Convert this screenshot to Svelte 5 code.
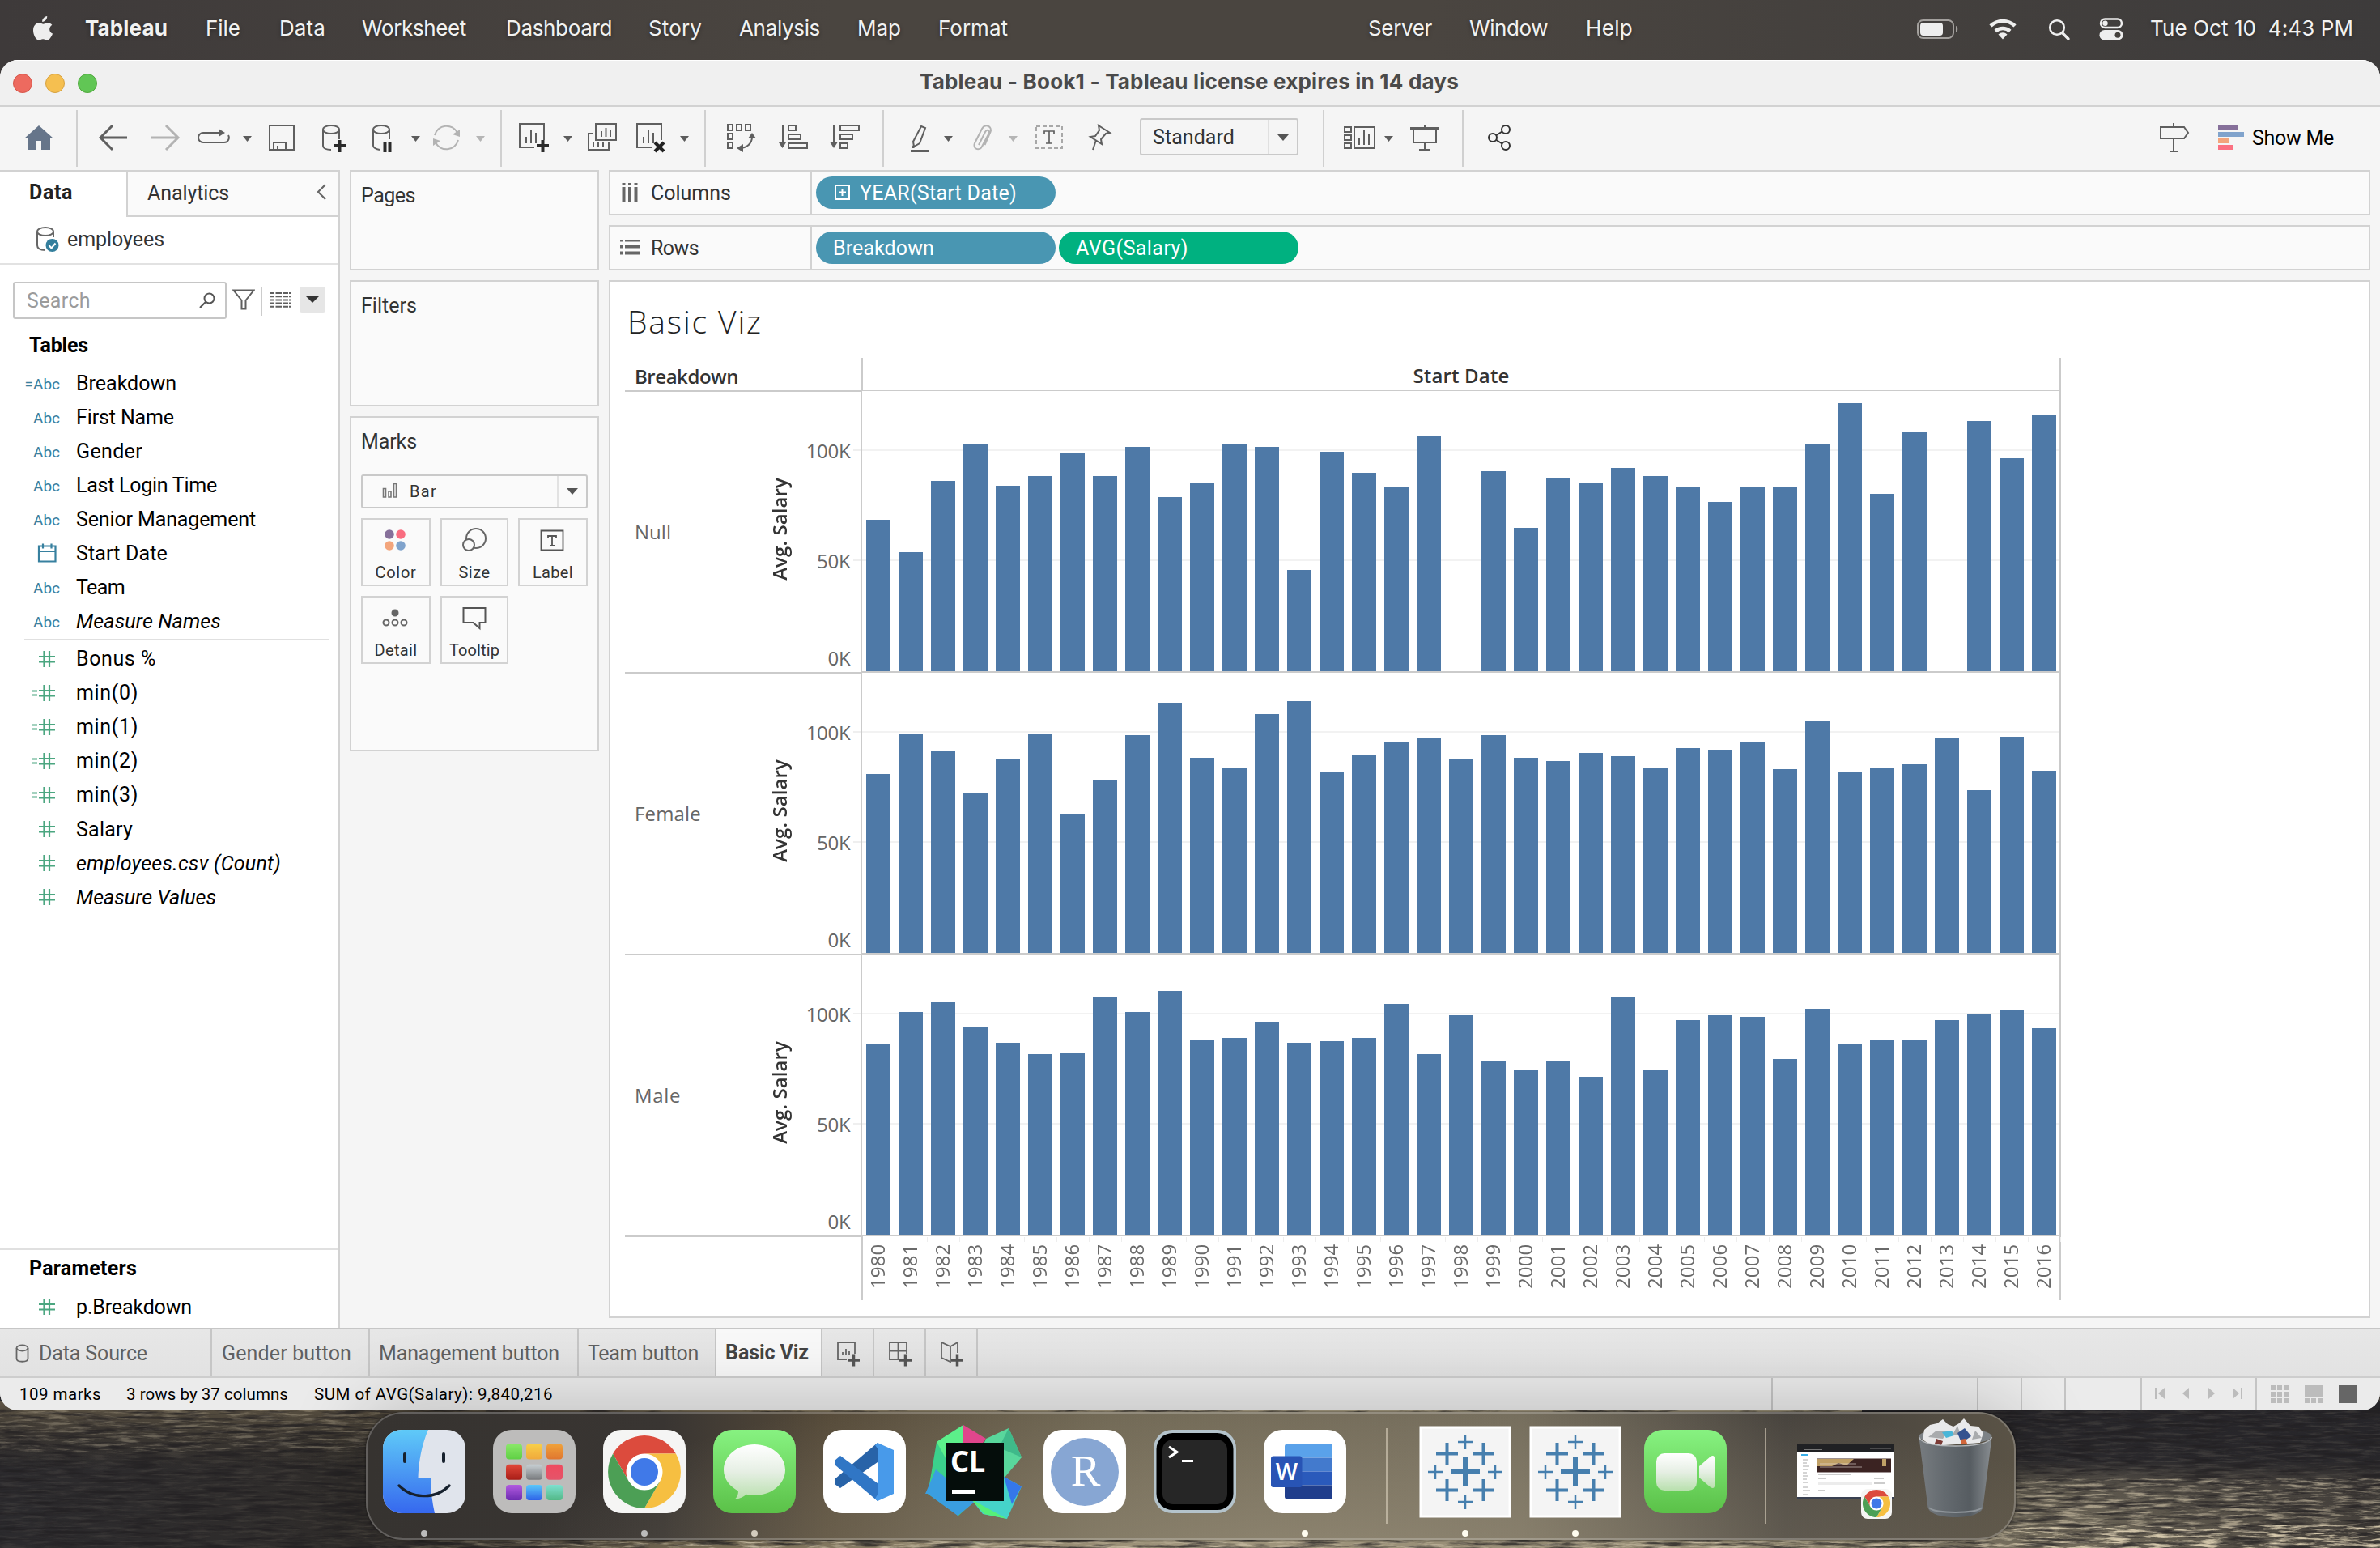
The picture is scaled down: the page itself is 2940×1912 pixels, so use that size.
<script>
  // Tracks a label out or in so that it occupies the given width.
  function fit(node, width) {
    const natural = node.getBoundingClientRect().width;
    const count = node.textContent.length;
    if (natural > 0 && count > 0) node.style.letterSpacing = `${(width - natural) / count}px`;
  }

  const menus = [
    ['Tableau', 102, 'm1'], ['File', 43, 'm2'], ['Data', 57, 'm3'], ['Worksheet', 129, 'm4'],
    ['Dashboard', 131, 'm5'], ['Story', 66, 'm6'], ['Analysis', 100, 'm7'], ['Map', 54, 'm8'],
    ['Format', 86, 'm9'], ['Server', 79, 'm10'], ['Window', 97, 'm11'], ['Help', 58, 'm12']
  ];

  const dimensions = [
    { name: 'Breakdown', w: 124, calc: true },
    { name: 'First Name', w: 121 },
    { name: 'Gender', w: 82 },
    { name: 'Last Login Time', w: 174 },
    { name: 'Senior Management', w: 222 },
    { name: 'Start Date', w: 113, date: true },
    { name: 'Team', w: 60 },
    { name: 'Measure Names', w: 179, italic: true }
  ];
  const measures = [
    { name: 'Bonus %', w: 99 },
    { name: 'min(0)', w: 77, calc: true },
    { name: 'min(1)', w: 77, calc: true },
    { name: 'min(2)', w: 77, calc: true },
    { name: 'min(3)', w: 77, calc: true },
    { name: 'Salary', w: 70 },
    { name: 'employees.csv (Count)', w: 253, italic: true },
    { name: 'Measure Values', w: 173, italic: true }
  ];

  const years = Array.from({ length: 37 }, (_, i) => 1980 + i);
  const bands = [
    { name: 'Null', w: 45, bars: [187,147,235,281,229,241,269,241,277,215,233,281,277,125,271,245,227,291,0,247,177,239,233,251,241,227,209,227,227,281,331,219,295,0,309,263,317] },
    { name: 'Female', w: 82, bars: [221,271,249,197,239,271,171,213,269,309,241,229,295,311,223,245,261,265,239,269,241,237,247,243,229,253,251,261,227,287,223,229,233,265,201,267,225] },
    { name: 'Male', w: 57, bars: [235,275,287,257,237,223,225,293,275,301,241,243,263,237,239,243,285,223,271,215,203,215,195,293,203,265,271,269,217,279,235,241,241,265,273,277,255] }
  ];

  const plusMarks = [
    [0, 74, 18, 6], [-22.5, 51.5, 13.5, 4], [22.5, 51.5, 13.5, 4], [-22.5, 96.5, 13.5, 4], [22.5, 96.5, 13.5, 4],
    [0, 37, 9, 2.5], [0, 111, 9, 2.5], [-37, 74, 9, 2.5], [37, 74, 9, 2.5]
  ];
  const pads = [
    ['#8be86a', '#5fd044'], ['#f8cf48', '#f0a93c'], ['#f0a23a', '#e0762f'],
    ['#e2483a', '#a81d17'], ['#c8d0d4', '#77797c'], ['#ef4a5e', '#e5546a'],
    ['#b25be0', '#6c2bb0'], ['#5bc8fa', '#2d62e8'], ['#7fe0d0', '#52b886']
  ];
</script>

{#snippet caret(x, light)}
  <path d="M{x - 5} 168h11l-5.5 7z" fill={light ? '#b5b5b5' : '#5c5c5c'} stroke="none" />
{/snippet}

{#snippet hash(calc)}
  <svg class="ficon" viewBox="0 0 40 26">
    <path d="M21.5 3v20M28 3v20M15 10h20M15 16.5h20" stroke="#4ba680" stroke-width="2.2" />
    {#if calc}<path d="M7 10.5h6M7 15.5h6" stroke="#4ba680" stroke-width="2.2" />{/if}
  </svg>
{/snippet}

{#snippet chromeMark()}
  <circle r="45" fill="#fff" />
  <path d="M-38.9 -22.5A45 45 0 0 1 38.9 -22.5H0A22.5 22.5 0 0 0 -19.5 11.2z" fill="#dc4b3d" />
  <path d="M38.9 -22.5A45 45 0 0 1 0 45L19.5 11.2A22.5 22.5 0 0 0 0 -22.5z" fill="#f6bf41" />
  <path d="M0 45A45 45 0 0 1 -38.9 -22.5L-19.5 11.2A22.5 22.5 0 0 0 19.5 11.2z" fill="#4c9f55" />
  <circle r="21.5" fill="#fff" />
  <circle r="17" fill="#4079e8" />
{/snippet}

{#snippet tableauIcon()}
  <svg class="app" viewBox="-68 0 136 158">
    <rect x="-55" y="19" width="110" height="110" fill="#f4f4f4" stroke="#fff" stroke-width="3" />
    {#each plusMarks as [x, y, r, t]}
      <path d="M{x - r} {y}h{2 * r}M{x} {y - r}v{2 * r}" stroke="#467fae" stroke-width={t} />
    {/each}
    <circle cy="150" r="4" fill="#fffdf0" />
  </svg>
{/snippet}

<div class="screen">
  <svg class="wallpaper" viewBox="0 0 2940 1912">
    <defs>
      <filter id="grain" x="0" y="0" width="100%" height="100%" color-interpolation-filters="sRGB">
        <feTurbulence type="fractalNoise" baseFrequency="0.035 0.3" numOctaves="5" seed="8" />
        <feColorMatrix values="0 0 0 0 .84  0 0 0 0 .79  0 0 0 0 .68  3.4 1.2 0 0 -2.15" />
      </filter>
      <filter id="dark" x="0" y="0" width="100%" height="100%" color-interpolation-filters="sRGB">
        <feTurbulence type="fractalNoise" baseFrequency="0.02 0.22" numOctaves="5" seed="3" />
        <feColorMatrix values="0 0 0 0 .13  0 0 0 0 .12  0 0 0 0 .13  3.4 1 0 0 -2" />
      </filter>
      <linearGradient id="wl" x1="0" x2="1" y1="0" y2="0">
        <stop offset="0" stop-color="#2b2a2d" /><stop offset=".15" stop-color="#302d2b" />
        <stop offset=".3" stop-color="#85785e" /><stop offset=".5" stop-color="#b5a98d" />
        <stop offset=".75" stop-color="#a0967c" /><stop offset="1" stop-color="#47423c" />
      </linearGradient>
      <linearGradient id="topfade" x1="0" x2="0" y1="0" y2="1">
        <stop offset="0" stop-color="#262529" stop-opacity="1" /><stop offset=".4" stop-color="#262529" stop-opacity=".95" />
        <stop offset=".58" stop-color="#262529" stop-opacity=".3" /><stop offset="1" stop-color="#262529" stop-opacity="0" />
      </linearGradient>
      <linearGradient id="leftband" x1="0" x2="0" y1="0" y2="1">
        <stop offset="0" stop-color="#695e4a" stop-opacity=".85" /><stop offset="1" stop-color="#3a342b" stop-opacity="0" />
      </linearGradient>
      <linearGradient id="mg" x1="0" x2="1" y1="0" y2="0">
        <stop offset="0" stop-color="#fff" stop-opacity="0" /><stop offset=".2" stop-color="#fff" />
      </linearGradient>
      <mask id="ease"><rect x="430" y="1740" width="2510" height="172" fill="url(#mg)" /></mask>
    </defs>
    <rect y="1700" width="2940" height="212" fill="url(#wl)" />
    <rect x="2300" y="1730" width="640" height="182" fill="url(#topfade)" />
    <rect y="1730" width="600" height="86" fill="url(#leftband)" />
    <g mask="url(#ease)"><rect x="430" y="1884" width="2510" height="28" filter="url(#grain)" /></g>
    <rect x="2440" y="1826" width="500" height="86" filter="url(#grain)" opacity=".6" />
    <rect y="1740" width="470" height="54" filter="url(#grain)" opacity=".3" />
    <rect y="1794" width="470" height="118" filter="url(#grain)" opacity=".07" />
    <rect x="2440" y="1740" width="500" height="86" filter="url(#grain)" opacity=".1" />
    <rect y="1736" width="2940" height="176" filter="url(#dark)" opacity=".7" />
  </svg>

  <header class="menubar">
    <svg class="apple" viewBox="0 0 28 34">
      <path d="M19.2 1c.3 3.4-2.600 6.900-6 6.900C12.800 4.800 15.700 1.400 19.200 1zM25.300 11.700c-4.600 2.900-3.800 9 .7 10.900-1 2.900-3.600 8-6.600 8-2.200 0-2.900-1.300-5.300-1.300s-3.200 1.300-5.200 1.300C5.600 30.600 2 24.200 2 18.500 2 12.700 5.500 9.300 9.300 9.300c2.200 0 3.900 1.500 5.200 1.500 1.200 0 3.300-1.700 5.900-1.500 1.800.1 3.800.9 4.900 2.400z" fill="#eee" />
    </svg>
    {#each menus as [label, w, slot], i}
      <div class="menu {slot}" class:strong={i === 0}><span use:fit={w}>{label}</span></div>
    {/each}
    <svg class="tray" viewBox="2360 0 290 74">
      <rect x="2369" y="25" width="44" height="22" rx="6.500" fill="none" stroke="#a3a09d" stroke-width="2" />
      <rect x="2372" y="28" width="28" height="16" rx="4" fill="#eee" />
      <path d="M2416 32c3 1 3 7 0 8z" fill="#a3a09d" />
      <g fill="none" stroke="#eee" stroke-width="4.500">
        <path d="M2459 32a21.500 21.500 0 0 1 30 0" /><path d="M2465 38.500a13.500 13.500 0 0 1 18 0" />
      </g>
      <path d="M2468.500 42.500a8 8 0 0 1 11 0l-5.500 6z" fill="#eee" />
      <circle cx="2541" cy="34" r="8.800" fill="none" stroke="#eee" stroke-width="2.600" />
      <path d="M2547.500 40.500l7.500 7.500" stroke="#eee" stroke-width="3.400" stroke-linecap="round" />
      <rect x="2595" y="23.500" width="26" height="10.500" rx="5.250" fill="none" stroke="#eee" stroke-width="2.500" />
      <circle cx="2600.500" cy="28.700" r="3.200" fill="#eee" />
      <rect x="2593.500" y="37" width="29" height="12.500" rx="6.250" fill="#eee" /><circle cx="2616" cy="43.200" r="3.500" fill="#45413d" />
    </svg>
    <div class="clock"><span use:fit={251}>Tue Oct 10&nbsp; 4:43 PM</span></div>
  </header>

  <main class="window">
    <div class="titlebar">
      <div class="lights"><i class="red"></i><i class="amber"></i><i class="green"></i></div>
      <span class="wtitle" use:fit={666}>Tableau - Book1 - Tableau license expires in 14 days</span>
    </div>

    <nav class="toolbar">
      <svg class="tg g1" viewBox="0 136 94 70">
        <path d="M48 155l18 16h-4v14H51v-11h-7v11H34v-14h-4z" fill="#66758a" />
      </svg>
      <svg class="tg g2" viewBox="96 136 522 70" fill="none" stroke="#5f5f5f" stroke-width="2">
        <path d="M157 170h-33M139 155l-15 15 15 15" stroke-width="3" />
        <path d="M187 170h33M205 155l15 15-15 15" stroke="#b3b3b3" stroke-width="3" />
        <path d="M272 164h-21a6 6 0 0 0 0 12h26a6 6 0 0 0 5-9" /><path d="M270 159l8 5-8 5z" fill="#5f5f5f" stroke="none" />
        {@render caret(305)}
        <path d="M333 155h30v30h-30zM338 185v-9h15v9M343 185v-5" />
        <ellipse cx="409" cy="160" rx="10" ry="5" /><path d="M399 160v20c0 3 4 5 10 5M419 160v12" /><path d="M412 180h15M419.500 173v15" stroke="#2b2b2b" stroke-width="4" />
        <ellipse cx="471" cy="160" rx="10" ry="5" /><path d="M461 160v20c0 3 3 4 8 5M481 160v12" /><path d="M475.500 175v13M481.500 175v13" stroke="#2b2b2b" stroke-width="4" />
        {@render caret(513)}
        <g stroke="#b3b3b3"><path d="M537 167a15 15 0 0 1 28-3M566 173a15 15 0 0 1-28 3" /><path d="M568 160v9l-9-3zM535 180v-9l9 3z" fill="#b3b3b3" stroke="none" /></g>
        {@render caret(593, true)}
      </svg>
      <svg class="tg g3" viewBox="620 136 250 70" fill="none" stroke="#5f5f5f" stroke-width="2">
        <path d="M660 182h-18v-29h30v20M650 177v-8M656 177v-17M662 177v-13" /><path d="M663 180h15M670.500 173v15" stroke="#2b2b2b" stroke-width="4" />
        {@render caret(701)}
        <path d="M736 153h25v20h-25zM732 165h-5v20h25v-9M743 169v-7M748.500 169v-11M754 169v-8" /><path d="M733 181v-5M739 181v-5M745 181v-5" />
        <path d="M805 182h-18v-29h30v20M795 177v-8M801 177v-17M807 177v-13" /><path d="M809 176l11 11M820 176l-11 11" stroke="#222" stroke-width="4" />
        {@render caret(845)}
      </svg>
      <svg class="tg g4" viewBox="872 136 218 70" fill="none" stroke="#5f5f5f" stroke-width="2">
        <path d="M899 154h6v7h-6zM910 154h6v7h-6zM921 154h6v7h-6zM899 165h6v7h-6zM899 176h6v7h-6z" />
        <path d="M913 183c10 0 16-6 16-14" /><path d="M924 171l5-7 5 7zM918 178v10l-8-5z" fill="#5f5f5f" stroke="none" />
        <path d="M967 155v22M974 155h9v6h-9zM974 166h15v6h-15zM974 177h23v6h-23z" /><path d="M962 176h9l-4.500 7z" fill="#5f5f5f" stroke="none" />
        <path d="M1030 155v22M1038 155h23v6h-23zM1038 166h15v6h-15zM1038 177h9v6h-9z" /><path d="M1025.500 176h9l-4.500 7z" fill="#5f5f5f" stroke="none" />
      </svg>
      <svg class="tg g5" viewBox="1092 132 316 76" fill="none" stroke="#5f5f5f" stroke-width="2">
        <path d="M1138 156l5 2-7 19-7 4-1-6z" /><path d="M1125 186.500h22" stroke-width="3" /><path d="M1126 178l4 5h-4z" fill="#5f5f5f" stroke="none" />
        {@render caret(1171)}
        <path d="M1209 179l8-16c2-4 6-2 4.500 2l-8.500 16c-3 6-12 3-9-4l9-18c4-7 13-3 10.500 4l-7 16" stroke="#b3b3b3" />
        {@render caret(1251, true)}
        <rect x="1280" y="156" width="32" height="27" stroke="#a8a8a8" stroke-dasharray="5 3" />
        <path d="M1290 165v-3h12v3M1296 162v15M1292 177h8" stroke-width="1.700" />
        <path d="M1357 155l14 9-5 1-6 7 1 6-14-9 6-1 5-7zM1354 173l-4 12" />
      </svg>
      <div class="select"><span use:fit={101}>Standard</span><i><b></b></i></div>
      <svg class="tg g6" viewBox="1604 132 202 76" fill="none" stroke="#5f5f5f" stroke-width="2">
        <path d="M1635 136v70" stroke="#d0d0d0" />
        <path d="M1661 157h8v6h-8zM1661 167h8v6h-8zM1661 177h8v6h-8zM1673 157h25v26h-25zM1679 179v-8M1685 179v-18M1691 179v-13" />
        {@render caret(1715)}
        <path d="M1742 159h35" stroke-width="4" /><path d="M1746 159v17h28v-17M1760 154v4M1760 176v9M1753 185h14" />
      </svg>
      <svg class="tg g7" viewBox="1806 132 974 76" fill="none" stroke="#333" stroke-width="2">
        <path d="M1807 136v70" stroke="#d0d0d0" />
        <circle cx="1844" cy="170" r="5" /><circle cx="1860" cy="160" r="5" /><circle cx="1860" cy="180" r="5" /><path d="M1848.500 167l7-4.500M1848.500 173l7 4.500" />
        <path d="M2669 157h29l5 7-5 7h-29zM2685 152v4M2685 172v15M2680 187h10" stroke="#5f5f5f" />
        <path d="M2740 158h25" stroke="#86709a" stroke-width="6" /><path d="M2740 166h32" stroke="#80a3cc" stroke-width="6" />
        <path d="M2740 174h13" stroke="#f3a57c" stroke-width="6" /><path d="M2740 182h19" stroke="#fb7182" stroke-width="6" />
      </svg>
      <span class="showme" use:fit={101}>Show Me</span>
    </nav>

    <div class="work">
      <aside class="side">
        <div class="tabs2">
          <div class="tabA"><span use:fit={54}>Data</span></div>
          <div class="tabB"><span use:fit={101}>Analytics</span>
            <svg viewBox="0 0 14 20"><path d="M12 1L3 10l9 9" fill="none" stroke="#666" stroke-width="2.200" /></svg>
          </div>
        </div>
        <div class="source">
          <svg viewBox="44 280 32 34" fill="none" stroke="#666" stroke-width="2">
            <ellipse cx="56" cy="287" rx="10" ry="5" /><path d="M46 287v17c0 4 4 6 10 6M66 287v7" />
            <circle cx="64.500" cy="304" r="8" fill="#347f9d" stroke="none" /><path d="M60.500 304l3 3.500 5-6" stroke="#fff" />
          </svg>
          <span use:fit={120}>employees</span>
        </div>
        <div class="searchrow">
          <div class="search"><span use:fit={79}>Search</span>
            <svg viewBox="0 0 20 20"><circle cx="12.500" cy="7.500" r="6" fill="none" stroke="#555" stroke-width="2" /><path d="M8 12l-7 7" stroke="#555" stroke-width="2.200" /></svg>
          </div>
          <svg class="funnel" viewBox="0 0 28 26"><path d="M1.500 1.500h25L16.500 14v10.500h-5V14z" fill="none" stroke="#5f5f5f" stroke-width="2" /></svg>
          <svg class="list" viewBox="322 350 44 38">
            <path d="M324 352v36" stroke="#ccc" stroke-width="2" />
            <path d="M335 360h26M335 364.200h26M335 368.400h26M335 372.600h26M335 376.800h26" stroke="#5f5f5f" stroke-width="2" stroke-dasharray="5 1.500 7.500 1 7 1 3 0" />
          </svg>
          <div class="drop"><b></b></div>
        </div>
        <h2><span use:fit={73}>Tables</span></h2>
        <ul>
          {#each dimensions as f}
            <li>
              {#if f.date}
                <svg class="ficon" viewBox="0 0 40 26"><path d="M15 4.500h20.500v19H15zM15 11h20M20 1.500v6M30.500 1.500v6" fill="none" stroke="#37809f" stroke-width="2.200" /></svg>
              {:else}
                <i class="abc">{f.calc ? '=' : ''}<span use:fit={32}>Abc</span></i>
              {/if}
              <span class="fname" class:italic={f.italic} use:fit={f.w}>{f.name}</span>
            </li>
          {/each}
        </ul>
        <hr />
        <ul>
          {#each measures as f}
            <li>{@render hash(f.calc)}<span class="fname" class:italic={f.italic} use:fit={f.w}>{f.name}</span></li>
          {/each}
        </ul>
        <section class="params">
          <h2><span use:fit={133}>Parameters</span></h2>
          <ul><li>{@render hash(false)}<span class="fname" use:fit={143}>p.Breakdown</span></li></ul>
        </section>
      </aside>

      <div class="cards">
        <section class="card pages"><span use:fit={67}>Pages</span></section>
        <section class="card filters"><span use:fit={69}>Filters</span></section>
        <section class="card marks">
          <span use:fit={69}>Marks</span>
          <div class="marktype">
            <svg viewBox="0 0 20 20"><path d="M2.500 7.500h3v10.500h-3zM9 11h3v7h-3zM15.500 1.500h3v16.500h-3z" fill="none" stroke="#777" stroke-width="1.600" /></svg>
            <span use:fit={34}>Bar</span><i><b></b></i>
          </div>
          <div class="btns">
            <div><svg viewBox="-20 -20 40 40"><circle cx="-8" cy="-7" r="5.800" fill="#86709a" /><circle cx="6" cy="-7" r="5.800" fill="#f96d80" /><circle cx="-8" cy="7" r="5.800" fill="#f3a57c" /><circle cx="6" cy="7" r="5.800" fill="#80a3cc" /></svg><span use:fit={51}>Color</span></div>
            <div><svg viewBox="-20 -20 40 40" fill="#fafafa" stroke="#666" stroke-width="2"><circle cx="2" cy="-2" r="12" /><circle cx="-7" cy="6" r="7" /></svg><span use:fit={39}>Size</span></div>
            <div><svg viewBox="-20 -20 40 40" fill="none" stroke="#555" stroke-width="1.800"><path d="M-14.500 -11.500h27v24h-27zM-6 -2.500v-2.500h10v2.500M-1 -5v12M-4 7h6" /></svg><span use:fit={50}>Label</span></div>
            <div><svg viewBox="-20 -20 40 40" fill="none" stroke="#666" stroke-width="2"><g transform="translate(-1 0)"><circle cy="-6" r="4.500" fill="#666" stroke="none" /><circle cx="-11" cy="6" r="3.500" /><circle cy="6" r="3.500" /><circle cx="11" cy="6" r="3.500" /></g></svg><span use:fit={53}>Detail</span></div>
            <div><svg viewBox="-20 -20 40 40" fill="none" stroke="#555" stroke-width="2"><path d="M-13.500 -12h27v18h-7v7l-8-7h-12z" /></svg><span use:fit={62}>Tooltip</span></div>
          </div>
        </section>
      </div>

      <div class="canvas">
        <div class="shelf">
          <div class="shelfname">
            <svg viewBox="766 222 24 28"><path d="M770.500 224v3M778 224v3M785.500 224v3M770.500 229v19M778 229v19M785.500 229v19" stroke="#666" stroke-width="4" /></svg>
            <span use:fit={99}>Columns</span>
          </div>
          <div class="pill blue">
            <svg viewBox="0 0 20 20"><path d="M1 1h17v17H1zM5 9.500h9M9.500 5v9" fill="none" stroke="#fff" stroke-width="2" /></svg>
            <span use:fit={194}>YEAR(Start Date)</span>
          </div>
        </div>
        <div class="shelf second">
          <div class="shelfname">
            <svg viewBox="766 298 24 20"><path d="M766 298.500h4M772 298.500h18M766 306.500h4M772 306.500h18M766 314.500h4M772 314.500h18" stroke="#666" stroke-width="4" /></svg>
            <span use:fit={59}>Rows</span>
          </div>
          <div class="pill blue bd"><span use:fit={125}>Breakdown</span></div>
          <div class="pill teal"><span use:fit={139}>AVG(Salary)</span></div>
        </div>

        <section class="viz">
          <h1><span use:fit={167}>Basic Viz</span></h1>
          <div class="vhead">
            <div class="rowhead"><span use:fit={128}>Breakdown</span></div>
            <div class="colhead"><span use:fit={119}>Start Date</span></div>
          </div>
          {#each bands as band}
            <div class="band">
              <div class="bandlabel">
                <div class="bname"><span use:fit={band.w}>{band.name}</span></div>
                <span class="atitle">Avg. Salary</span>
                <div class="axis"><span>100K</span><span>50K</span><span>0K</span></div>
                <div class="ticks"><i></i><i></i></div>
              </div>
              <div class="plot">
                {#each band.bars as h}<i style:height="{h}px"></i>{/each}
              </div>
            </div>
          {/each}
          <div class="yearrow">
            <div class="years">{#each years as y}<span>{y}</span>{/each}</div>
          </div>
        </section>
      </div>
    </div>

    <div class="sheets">
      <div class="sheet s1">
        <svg viewBox="18 1658 20 26" fill="none" stroke="#666" stroke-width="1.800"><ellipse cx="27.500" cy="1664" rx="7" ry="3.500" /><path d="M20.500 1664v13c0 5 14 5 14 0v-13" /></svg>
        <span use:fit={134}>Data Source</span>
      </div>
      <div class="sheet s2"><span use:fit={160}>Gender button</span></div>
      <div class="sheet s3"><span use:fit={223}>Management button</span></div>
      <div class="sheet s4"><span use:fit={137}>Team button</span></div>
      <div class="sheet s5 active"><span use:fit={103}>Basic Viz</span></div>
      <div class="sheet add"><svg viewBox="0 0 30 32" fill="none" stroke="#666" stroke-width="1.800"><path d="M13 23H2V2h21v14M8 18v-4M12 18v-8M16 18v-5" /><path d="M14 24h15M21.500 16.500v15" stroke="#555" stroke-width="3.500" /></svg></div>
      <div class="sheet add"><svg viewBox="0 0 30 32" fill="none" stroke="#666" stroke-width="1.800"><path d="M13 23H2V2h21v14M2 12.500h21M12.500 2v21" /><path d="M14 24h15M21.500 16.500v15" stroke="#555" stroke-width="3.500" /></svg></div>
      <div class="sheet add"><svg viewBox="0 0 30 32" fill="none" stroke="#666" stroke-width="1.800"><path d="M22 15V2l-9 5-11-5v19l11 5V7" /><path d="M14 24h15M21.500 16.500v15" stroke="#555" stroke-width="3.500" /></svg></div>
    </div>

    <footer class="status">
      <span class="st1" use:fit={101}>109 marks</span>
      <span class="st2" use:fit={200}>3 rows by 37 columns</span>
      <span class="st3" use:fit={295}>SUM of AVG(Salary): 9,840,216</span>
      <svg viewBox="2188 1702 752 40">
        <path d="M2189 1702v40M2443 1702v40M2497 1702v40M2551 1702v40M2645 1702v40M2787 1702v40" stroke="#c4c4c4" stroke-width="2" />
        <path d="M2674 1714v14l-8-7zM2662 1714h2v14h-2zM2704 1714v14l-8-7zM2728 1714v14l8-7zM2758 1714v14l8-7zM2768 1714h2v14h-2z" fill="#bcbcbc" />
        <path d="M2805 1711h6v6h-6zM2813 1711h6v6h-6zM2821 1711h6v6h-6zM2805 1719h6v6h-6zM2813 1719h6v6h-6zM2821 1719h6v6h-6zM2805 1727h6v6h-6zM2813 1727h6v6h-6zM2821 1727h6v6h-6zM2847 1711h22v14h-22zM2847 1727h6v6h-6zM2855 1727h6v6h-6zM2863 1727h6v6h-6z" fill="#bcbcbc" />
        <path d="M2889 1711h22v22h-22z" fill="#666" />
      </svg>
    </footer>
  </main>

  <div class="dock">
    <svg class="app" viewBox="-68 0 136 158">
      <defs>
        <linearGradient id="fb" x1="0" x2="0" y1="0" y2="1"><stop offset="0" stop-color="#5fcaf8" /><stop offset="1" stop-color="#3668ee" /></linearGradient>
        <clipPath id="sq"><rect x="-51" y="22" width="102" height="103" rx="23" /></clipPath>
      </defs>
      <g clip-path="url(#sq)">
        <rect x="-51" y="22" width="102" height="103" fill="#e0e4ec" />
        <path d="M-51 22H5C-3 40 -7 62 -7.500 82H8c0 15 2 30 5 43H-51z" fill="url(#fb)" />
      </g>
      <path d="M-24 52v9M24 52v9" stroke="#17212e" stroke-width="4" stroke-linecap="round" />
      <path d="M-31 91c17 17 45 17 62 0" fill="none" stroke="#17212e" stroke-width="3.200" stroke-linecap="round" />
      <circle cy="150" r="4" fill="#bbb" />
    </svg>
    <svg class="app" viewBox="-68 0 136 158">
      <rect x="-51" y="22" width="102" height="103" rx="23" fill="#bdbcbb" />
      {#each pads as [a, b], i}
        <linearGradient id="pad{i}" x1="0" x2="0" y1="0" y2="1"><stop offset="0" stop-color={a} /><stop offset="1" stop-color={b} /></linearGradient>
        <rect x={-35 + (i % 3) * 25} y={39.500 + Math.floor(i / 3) * 25.300} width="20" height="19" rx="4" fill="url(#pad{i})" />
      {/each}
    </svg>
    <svg class="app" viewBox="-68 0 136 158">
      <rect x="-51" y="22" width="102" height="103" rx="23" fill="#f5f5f4" />
      <g transform="translate(0 74)">{@render chromeMark()}</g>
      <circle cy="150" r="4" fill="#bbb" />
    </svg>
    <svg class="app" viewBox="-68 0 136 158">
      <defs>
        <linearGradient id="gm" x1="0" x2="0" y1="0" y2="1"><stop offset="0" stop-color="#87f281" /><stop offset="1" stop-color="#5bc148" /></linearGradient>
        <linearGradient id="gb" x1="0" x2="0" y1="0" y2="1"><stop offset="0" stop-color="#fff" /><stop offset=".5" stop-color="#e6efe4" /><stop offset="1" stop-color="#b9e0ae" /></linearGradient>
      </defs>
      <rect x="-51" y="22" width="102" height="103" rx="23" fill="url(#gm)" />
      <path d="M0 40c21 0 38 14 38 31.500S21 103 0 103c-4 0-7-.4-10-1.200-4 3.500-8 5.500-14 5.700 3-3 4-6 4-10C-31 92-38 82-38 71.500-38 54-21 40 0 40z" fill="url(#gb)" />
      <circle cy="150" r="4" fill="#d3cbbd" />
    </svg>
    <svg class="app" viewBox="-68 0 136 158">
      <rect x="-51" y="22" width="102" height="103" rx="23" fill="#fff" />
      <path d="M16 38v24L-30 94l-7-5v-6z" fill="#2863a8" />
      <path d="M-30 54l-7 6v5l53 45V88z" fill="#3076c5" />
      <path d="M16 38l20 9v54l-20 9-3-3 3-5V45l-3-4z" fill="#489aea" />
    </svg>
    <svg class="app" viewBox="-68 0 136 158">
      <path d="M-14 16L-47 37-58 101-20 128 0 110z" fill="#3bd18c" /><path d="M-58 101l-3 0 13-30 48 40-21 17z" fill="#3a9ee0" />
      <path d="M-14 16L-47 37l11 20 22-10z" fill="#5cf08a" /><path d="M-14 16L14 33 0 50-14 45z" fill="#e0468c" />
      <path d="M14 33l28-13 16 36-22 26-30-30z" fill="#59d79c" /><path d="M42 20L30 44l28 12z" fill="#3fb98a" />
      <path d="M36 80l22 12-18 40-30-6-14-18z" fill="#45d3c9" /><path d="M36 80l22 12-12 22z" fill="#3577ea" /><path d="M-4 108l44 24-28-6z" fill="#55f07a" />
      <rect x="-36" y="38" width="72" height="72" fill="#050d0b" />
      <text x="-30" y="74" class="cl">CL</text>
      <rect x="-28" y="96" width="28" height="5" fill="#fff" />
    </svg>
    <svg class="app" viewBox="-68 0 136 158">
      <rect x="-51" y="22" width="102" height="103" rx="23" fill="#fff" />
      <circle cy="74" r="42" fill="#87a6d3" /><text x="1" y="91" class="rs" text-anchor="middle">R</text>
    </svg>
    <svg class="app" viewBox="-68 0 136 158">
      <rect x="-51" y="22" width="102" height="103" rx="23" fill="#b4c3cb" />
      <rect x="-47.500" y="26" width="95" height="95" rx="20" fill="#000" />
      <rect x="-40" y="34" width="80" height="80" rx="13" fill="#262626" />
      <path d="M-32 43l10 6.500-10 6.500" fill="none" stroke="#fff" stroke-width="3" /><path d="M-16 60.500h14" stroke="#fff" stroke-width="3" />
    </svg>
    <svg class="app" viewBox="-68 0 136 158">
      <rect x="-51" y="22" width="102" height="103" rx="23" fill="#fff" />
      <path d="M-22 39.500h53a3 3 0 0 1 3 3v14h-59v-14a3 3 0 0 1 3-3z" fill="#5aa2ea" />
      <rect x="-25" y="56.500" width="59" height="17" fill="#437acd" /><rect x="-25" y="73.500" width="59" height="17" fill="#2a5abb" />
      <path d="M-25 90.500h59v14a3 3 0 0 1-3 3h-53a3 3 0 0 1-3-3z" fill="#203e8c" />
      <rect x="-42" y="54.500" width="38.500" height="38.500" rx="3" fill="#2854b5" />
      <text x="-22.500" y="84" class="wd" text-anchor="middle">W</text>
      <circle cy="150" r="4" fill="#fffdf0" />
    </svg>
    <i class="dsep a"></i>
    {@render tableauIcon()}
    {@render tableauIcon()}
    <svg class="app" viewBox="-68 0 136 158">
      <rect x="-51" y="22" width="102" height="103" rx="23" fill="url(#gm)" />
      <rect x="-36" y="51" width="50" height="46" rx="10" fill="url(#gb)" />
      <path d="M17 67L31 55c3-2 5-1 5 2v34c0 3-2 4-5 2L17 81z" fill="url(#gb)" />
    </svg>
    <i class="dsep b"></i>
    <svg class="mini" viewBox="2210 1744 136 158">
      <rect x="2220" y="1784" width="120" height="68" fill="#fff" />
      <rect x="2220" y="1784" width="120" height="9.500" fill="#202124" />
      <path d="M2229 1790.500h22M2310 1789h26" stroke="#777" />
      <rect x="2245" y="1801.500" width="91" height="17" fill="#3b2322" /><path d="M2245 1802h45l-9 8-10-3-8 4h-18zM2325 1802h5v9h-5z" fill="#c0a066" />
      <path d="M2248 1808h45M2248 1812h52" stroke="#e8e0dc" stroke-opacity=".6" />
      <path d="M2225 1797h8" stroke="#3aaee8" stroke-width="2" />
      <path d="M2227 1803h6M2227 1807h5M2227 1811h8M2227 1815h7M2227 1819h5M2227 1823h6M2227 1827h5M2227 1831h7M2227 1837h6M2227 1841h9M2227 1846h7" stroke="#aaa" />
      <path d="M2246 1821h40M2246 1826h10M2246 1841h9M2315 1826h12M2315 1832h14" stroke="#999" /><rect x="2246" y="1830" width="67" height="4" fill="#ececec" />
      <rect x="2220" y="1849" width="120" height="3" fill="#3a4152" />
      <rect x="2299" y="1839" width="38" height="37" rx="8" fill="#f5f5f4" />
      <g transform="translate(2318 1857) scale(.38)">{@render chromeMark()}</g>
    </svg>
    <svg class="mini trash" viewBox="2362 1744 108 158">
      <defs><linearGradient id="tr" x1="0" x2="1" y1="0" y2="0"><stop offset="0" stop-color="#777c80" /><stop offset=".35" stop-color="#646a6f" /><stop offset=".7" stop-color="#565c61" /><stop offset="1" stop-color="#888d91" /></linearGradient></defs>
      <ellipse cx="2415.500" cy="1774" rx="45" ry="10" fill="#7d8286" />
      <path d="M2375 1778l2-12 7-6 9-2 7-5 6 6 7 3 7-4 6-6 8 9 10 1 6 8-4 12-60 4z" fill="#e9e9ea" />
      <path d="M2382 1775l10-8 14 1-6 9zM2412 1772l6-11 4 11zM2440 1767l8 9-12 2z" fill="#a9abad" />
      <path d="M2399 1769l12-2 3 6-10 3z" fill="#49b6d8" /><path d="M2418 1770l9-6 8 10-12 8z" fill="#34528f" /><path d="M2422 1778l6-1 2 6h-8z" fill="#d2663a" /><path d="M2392 1777l8 3-2 5-8-2z" fill="#7b3a35" />
      <path d="M2370.500 1775c3 8 20 11 45 11s42-3 45-11l-11 87c-2 7-14 12-34 12s-32-5-34-12z" fill="url(#tr)" />
      <path d="M2370.500 1775c3 8 20 11 45 11s42-3 45-11" fill="none" stroke="#b4b8bb" stroke-width="1.500" />
      <path d="M2383 1862c6 8 59 8 65 0" fill="none" stroke="#8f959a" stroke-width="2" />
    </svg>
  </div>
</div>

<style>
  :global(body) { margin: 0; overflow: hidden; background: #2a2829; }
  .screen { position: relative; width: 2940px; height: 1912px; overflow: hidden; display: flex; flex-direction: column; font-family: Roboto, "Liberation Sans", sans-serif; font-size: 25px; color: #111; background: linear-gradient(90deg, #3e3a3a, #4a4540 35%, #4a4540 60%, #3d3b3b); }
  .screen * { box-sizing: border-box; }
  span { display: inline-block; white-space: pre; }
  i { font-style: normal; display: block; }
  b { display: block; width: 0; height: 0; border: 7px solid transparent; border-top: 8px solid #555; border-bottom: 0; }
  svg { display: block; flex: none; }
  .wallpaper { position: absolute; inset: 0; width: 2940px; height: 1912px; }

  .menubar { position: relative; height: 74px; flex: none; display: flex; align-items: center; font-family: Inter, sans-serif; font-size: 26px; color: #f2f2f1; text-shadow: 0 2px 5px rgba(0,0,0,.35); }
  .apple { width: 28px; height: 34px; margin: -2px 38px 0 39px; }
  .menu { flex: none; line-height: 70px; height: 74px; }
  .strong { font-weight: 700; }
  .m1 { width: 149px; } .m2 { width: 91px; } .m3 { width: 102px; } .m4 { width: 178px; } .m5 { width: 176px; } .m6 { width: 112px; }
  .m7 { width: 146px; } .m8 { width: 100px; } .m9 { width: 531px; } .m10 { width: 125px; } .m11 { width: 144px; } .m12 { width: 401px; }
  .tray { width: 290px; height: 74px; }
  .clock { line-height: 70px; height: 74px; margin-left: 6px; }

  .window { position: relative; width: 2940px; height: 1668px; flex: none; border-radius: 22px; overflow: hidden; background: #f5f5f5; display: flex; flex-direction: column; }
  .titlebar { height: 58px; flex: none; background: #f0f0f0; border-bottom: 2px solid #d2d2d2; border-top: 1px solid #fff; display: flex; align-items: center; }
  .lights { display: flex; gap: 16px; padding-left: 16px; width: 1136px; }
  .lights i { width: 24px; height: 24px; border-radius: 50%; }
  .red { background: #ed6a5f; border: 1px solid #d55549; } .amber { background: #f5bf50; border: 1px solid #d6a140; } .green { background: #61c655; border: 1px solid #51a73e; }
  .wtitle { font-family: Inter, sans-serif; font-weight: 700; font-size: 26px; color: #4a4a4a; line-height: 54px; padding-bottom: 3px; }

  .toolbar { height: 78px; flex: none; display: flex; }
  .tg { height: 76px; }
  .g1 { width: 94px; } .g2 { width: 522px; } .g3 { width: 250px; } .g4 { width: 218px; }
  .g1, .g2, .g3, .g4 { box-sizing: content-box !important; border-right: 2px solid #d0d0d0; height: 70px; margin: 4px 0; }
  .g5 { width: 316px; } .g6 { width: 202px; } .g7 { width: 974px; }
  .select { width: 196px; height: 46px; margin-top: 14px; flex: none; border: 2px solid #c9c9c9; border-radius: 3px; display: flex; justify-content: space-between; padding-left: 14px; line-height: 43px; color: #333; }
  .select i { width: 36px; border-left: 2px solid #e0e0e0; padding: 18px 0 0 10px; }
  .showme { color: #000; line-height: 78px; margin-left: 2px; }

  .work { height: 1430px; flex: none; display: flex; }
  .side { width: 420px; flex: none; border-right: 2px solid #d2d2d2; border-top: 2px solid #d2d2d2; background: #fff; display: flex; flex-direction: column; color: #000; }
  .tabs2 { display: flex; height: 56px; }
  .tabA { width: 156px; padding-left: 36px; font-weight: 700; line-height: 52px; color: #222; }
  .tabB { flex: 1; border-left: 2px solid #d2d2d2; border-bottom: 2px solid #d2d2d2; background: #fafafa; padding: 0 14px 0 24px; display: flex; justify-content: space-between; align-items: center; line-height: 52px; color: #333; }
  .tabB svg { width: 14px; height: 20px; margin-top: -4px; }
  .source { height: 59px; border-bottom: 2px solid #e2e2e2; display: flex; align-items: center; gap: 7px; padding: 0 0 2px 44px; color: #333; }
  .source svg { width: 32px; height: 34px; }
  .searchrow { display: flex; height: 46px; margin-top: 21px; padding-left: 16px; align-items: center; }
  .search { width: 264px; height: 46px; border: 2px solid #c6c6c6; border-radius: 3px; display: flex; align-items: center; justify-content: space-between; padding: 0 12px 0 15px; color: #9b9b9b; }
  .search svg { width: 20px; height: 20px; }
  .funnel { width: 28px; height: 26px; margin: -2px 5px 0 7px; }
  .list { width: 44px; height: 38px; margin-left: 1px; }
  .drop { width: 32px; height: 32px; background: #e6e6e6; border-radius: 3px; margin: -2px 0 0 5px; padding: 12px 0 0 8px; }
  .drop b { border-width: 8px 8px 0; border-top-color: #333; }
  h2 { font-size: 25px; font-weight: 700; margin: 0; padding-left: 36px; line-height: 30px; }
  .side > h2 { margin: 18px 0 10px; }
  ul { list-style: none; margin: 0; padding: 0; }
  li { height: 42.08px; display: flex; align-items: center; padding-left: 33px; }
  .fname { margin-left: 21px; }
  .italic { font-style: italic; }
  .ficon { width: 40px; height: 26px; }
  .abc { width: 40px; display: flex; justify-content: flex-end; font-size: 19px; color: #3a809e; padding-top: 2px; white-space: pre; }
  .abc span { width: 32px; }
  hr { border: 0; border-top: 2px solid #e0e0e0; margin: 0 12px 2px 30px; width: 376px; }
  .params { margin-top: auto; height: 98px; border-top: 2px solid #e0e0e0; padding-top: 8px; }
  .params li { height: 50px; padding-top: 14px; }
  .params h2 { line-height: 30px; }

  .cards { width: 332px; padding-left: 12px; display: flex; flex-direction: column; gap: 12px; flex: none; }
  .card { width: 308px; border: 2px solid #d2d2d2; background: #fafafa; padding: 13px 0 0 12px; color: #333; line-height: 34px; }
  .card > span { display: table; }
  .pages { height: 124px; } .filters { height: 156px; } .marks { height: 414px; }
  .marktype { width: 280px; height: 42px; border: 2px solid #c9c9c9; border-radius: 3px; margin-top: 23px; display: flex; align-items: center; font-size: 20px; padding-left: 23px; }
  .marktype svg { width: 20px; height: 20px; margin-right: 15px; margin-top: -2px; }
  .marktype i { width: 36px; height: 38px; margin-left: auto; border-left: 2px solid #e2e2e2; padding: 15px 0 0 10px; }
  .btns { display: grid; grid-template-columns: 86px 84px 86px; column-gap: 12px; row-gap: 12px; margin-top: 12px; }
  .btns div { height: 84px; border: 2px solid #d2d2d2; display: flex; flex-direction: column; align-items: center; font-size: 20px; line-height: 24px; padding-top: 5px; }
  .btns svg { width: 40px; height: 40px; margin-bottom: 8px; }

  .canvas { width: 2176px; flex: none; }
  .shelf { height: 56px; border: 2px solid #d2d2d2; background: #fafafa; display: flex; align-items: center; gap: 5px; }
  .second { margin-top: 12px; }
  .shelfname { width: 249px; height: 52px; border-right: 2px solid #d2d2d2; display: flex; align-items: center; gap: 14px; padding-left: 12px; color: #333; }
  .shelfname svg { width: 24px; }
  .pill { width: 296px; height: 40px; border-radius: 20px; color: #fff; display: flex; align-items: center; padding-left: 20px; }
  .bd { padding-left: 21px; }
  .pill + .pill { margin-left: -1px; padding-left: 21px; }
  .pill svg { width: 20px; height: 20px; margin: 0 11px 0 3px; }
  .blue { background: #4996b2; } .teal { background: #00b180; }

  .viz { margin-top: 12px; height: 1282px; border: 2px solid #d2d2d2; background: #fff; padding: 0 0 0 18px; font-family: "Open Sans", "Noto Sans", sans-serif; font-size: 24px; color: #666; }
  h1 { margin: 0; height: 94px; font-size: 39px; font-weight: 300; color: #222; line-height: 50px; padding: 24px 0 0 3px; }
  .vhead { display: flex; height: 41px; }
  .rowhead { width: 292px; border-bottom: 2px solid #cbcbcb; height: 42px; font-weight: 600; color: #333; padding-left: 12px; line-height: 46px; }
  .colhead { width: 1482px; border: 2px solid #cbcbcb; border-top: 0; border-bottom-width: 1px; height: 41px; font-weight: 600; color: #333; text-align: center; line-height: 43px; }
  .band { display: flex; height: 348px; }
  .bandlabel { position: relative; width: 292px; display: flex; align-items: center; border-bottom: 2px solid #cbcbcb; margin-bottom: -1px; height: 349px; padding-left: 12px; }
  .bname { width: 169px; flex: none; }
  .atitle { writing-mode: vertical-rl; transform: rotate(180deg); font-weight: 550; color: #333; letter-spacing: .1px; line-height: 28px; margin: -6px 0 0 -4px; }
  .axis { width: 77px; height: 347px; margin-left: -1px; display: flex; flex-direction: column; align-items: flex-end; justify-content: flex-end; line-height: 34px; letter-spacing: -.3px; }
  .axis span:nth-child(1) { margin-bottom: 102px; }
  .axis span:nth-child(2) { margin-bottom: 86px; }
  .ticks { align-self: flex-start; width: 10px; margin: 72px 0 0 4px; }
  .ticks i { height: 2px; background: #efefef; margin-bottom: 134px; }
  .plot { width: 1482px; height: 348px; border: 2px solid #cbcbcb; border-top: 0; border-left-width: 1px; display: flex; align-items: flex-end; gap: 10px; padding-left: 5px; background: linear-gradient(#f2f2f2, #f2f2f2) 0 72px / 100% 2px no-repeat, linear-gradient(#f2f2f2, #f2f2f2) 0 208px / 100% 2px no-repeat; }
  .plot i { width: 30px; flex: none; background: #4e79a7; }
  .yearrow { padding-left: 292px; }
  .years { width: 1482px; height: 79px; border: solid #cbcbcb; border-width: 0 2px; display: flex; padding-top: 1px; }
  .years span { width: 40px; flex: none; height: 70px; writing-mode: vertical-rl; transform: rotate(180deg); line-height: 36px; padding-bottom: 9px; text-align: right; letter-spacing: .1px; color: #6a6a6a; }
  .years span { background: linear-gradient(#eee, #eee) 0 100% / 1px 6px no-repeat; }

  .sheets { height: 62px; flex: none; display: flex; background: linear-gradient(#e7e7e7, #e2e2e2); border-top: 1px solid #c6c6c6; border-bottom: 2px solid #cdcdcd; color: #606060; }
  .sheet { border-right: 2px solid #c6c6c6; display: flex; align-items: center; padding: 2px 0 0 12px; flex: none; }
  .s1 { width: 262px; padding-left: 18px; } .s1 svg { width: 20px; height: 26px; margin-right: 10px; }
  .s2 { width: 195px; } .s3 { width: 258px; padding-left: 11px; } .s4 { width: 170px; padding-left: 11px; } .s5 { width: 131px; }
  .active { background: #f8f8f8; font-weight: 700; color: #444; padding: 0 0 0 11px; }
  .add { width: 64px; padding: 0 0 0 17px; } .add svg { width: 30px; height: 32px; margin-top: 3px; }

  .status { height: 40px; flex: none; display: flex; align-items: center; background: #ebebeb; font-size: 20.500px; color: #000; padding-left: 24px; }
  .st1 { margin-right: 31px; } .st2 { margin-right: 32px; }
  .status svg { width: 752px; height: 40px; margin-left: auto; }

  .dock { position: absolute; left: 452px; top: 1744px; width: 2038px; height: 158px; border-radius: 46px; display: flex; padding-left: 2px; border: 2px solid rgba(255,255,255,.22); background: radial-gradient(ellipse 1000px 260px at 1180px 200px, rgba(160,150,128,.7), rgba(160,150,128,0)), linear-gradient(90deg, #363330, #393532 18%, #554a39 28%, #6b6350 45%, #6f6858 70%, #45413c 86%, #5a5346); background-origin: border-box; box-shadow: 0 0 90px 10px rgba(0,0,0,.2), 0 0 3px rgba(0,0,0,.6); }
  .app { width: 136px; height: 158px; margin-top: -2px; }
  .dsep { width: 2px; height: 118px; margin-top: 18px; background: rgba(220,210,190,.6); flex: none; }
  .a { margin-left: 32px; margin-right: 28px; }
  .b { margin-left: 30px; margin-right: 28px; }
  .mini { width: 136px; height: 158px; margin-top: -2px; }
  .trash { width: 108px; margin-left: 16px; }
  .cl { font: 700 36px "Noto Sans", sans-serif; fill: #fff; }
  .rs { font: 55px "Liberation Serif", serif; fill: #fff; }
  .wd { font: 600 29px "Open Sans", sans-serif; fill: #fff; }
</style>
